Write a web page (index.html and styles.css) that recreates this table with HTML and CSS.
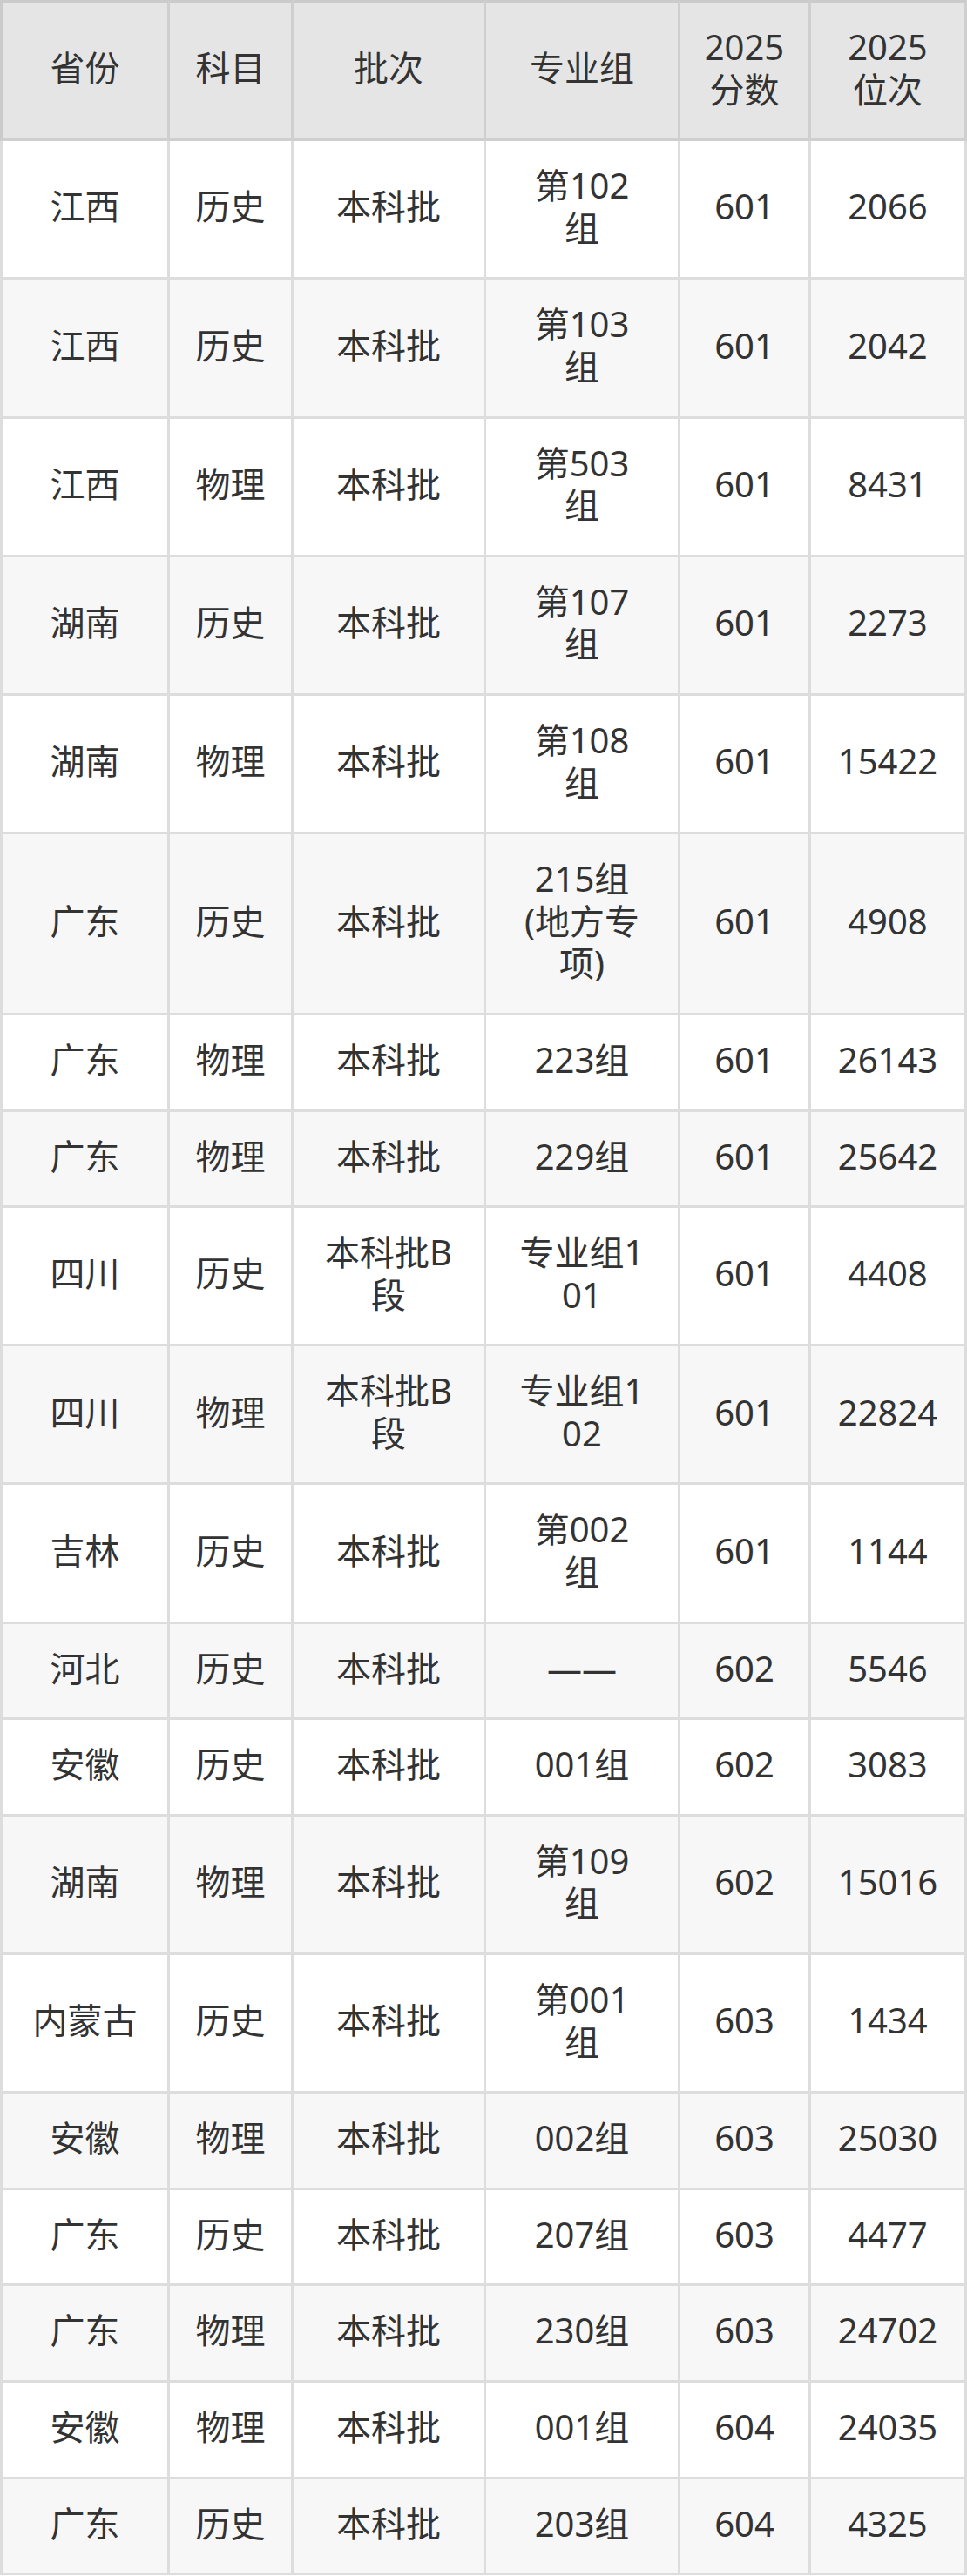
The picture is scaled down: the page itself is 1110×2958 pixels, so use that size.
FILE: index.html
```html
<!DOCTYPE html>
<html lang="zh-CN">
<head>
<meta charset="utf-8">
<title>2025 分数线</title>
<link rel="stylesheet" href="styles.css">
</head>
<body>
<table class="score-table">
  <colgroup>
    <col class="c-prov">
    <col class="c-subj">
    <col class="c-batch">
    <col class="c-group">
    <col class="c-score">
    <col class="c-rank">
  </colgroup>
  <thead>
    <tr>
      <th>省份</th>
      <th>科目</th>
      <th>批次</th>
      <th>专业组</th>
      <th>2025<br>分数</th>
      <th>2025<br>位次</th>
    </tr>
  </thead>
  <tbody>
    <tr><td>江西</td><td>历史</td><td>本科批</td><td>第102<br>组</td><td>601</td><td>2066</td></tr>
    <tr><td>江西</td><td>历史</td><td>本科批</td><td>第103<br>组</td><td>601</td><td>2042</td></tr>
    <tr><td>江西</td><td>物理</td><td>本科批</td><td>第503<br>组</td><td>601</td><td>8431</td></tr>
    <tr><td>湖南</td><td>历史</td><td>本科批</td><td>第107<br>组</td><td>601</td><td>2273</td></tr>
    <tr><td>湖南</td><td>物理</td><td>本科批</td><td>第108<br>组</td><td>601</td><td>15422</td></tr>
    <tr><td>广东</td><td>历史</td><td>本科批</td><td>215组<br>(地方专<br>项)</td><td>601</td><td>4908</td></tr>
    <tr><td>广东</td><td>物理</td><td>本科批</td><td>223组</td><td>601</td><td>26143</td></tr>
    <tr><td>广东</td><td>物理</td><td>本科批</td><td>229组</td><td>601</td><td>25642</td></tr>
    <tr><td>四川</td><td>历史</td><td>本科批B<br>段</td><td>专业组1<br>01</td><td>601</td><td>4408</td></tr>
    <tr><td>四川</td><td>物理</td><td>本科批B<br>段</td><td>专业组1<br>02</td><td>601</td><td>22824</td></tr>
    <tr><td>吉林</td><td>历史</td><td>本科批</td><td>第002<br>组</td><td>601</td><td>1144</td></tr>
    <tr><td>河北</td><td>历史</td><td>本科批</td><td>——</td><td>602</td><td>5546</td></tr>
    <tr><td>安徽</td><td>历史</td><td>本科批</td><td>001组</td><td>602</td><td>3083</td></tr>
    <tr><td>湖南</td><td>物理</td><td>本科批</td><td>第109<br>组</td><td>602</td><td>15016</td></tr>
    <tr><td>内蒙古</td><td>历史</td><td>本科批</td><td>第001<br>组</td><td>603</td><td>1434</td></tr>
    <tr><td>安徽</td><td>物理</td><td>本科批</td><td>002组</td><td>603</td><td>25030</td></tr>
    <tr><td>广东</td><td>历史</td><td>本科批</td><td>207组</td><td>603</td><td>4477</td></tr>
    <tr><td>广东</td><td>物理</td><td>本科批</td><td>230组</td><td>603</td><td>24702</td></tr>
    <tr><td>安徽</td><td>物理</td><td>本科批</td><td>001组</td><td>604</td><td>24035</td></tr>
    <tr><td>广东</td><td>历史</td><td>本科批</td><td>203组</td><td>604</td><td>4325</td></tr>
  </tbody>
</table>
</body>
</html>
```
FILE: styles.css
```css
html, body {
  margin: 0;
  padding: 0;
  background: #ffffff;
}

.score-table {
  width: 1110px;
  table-layout: fixed;
  border-collapse: separate;
  border-spacing: 0;
  font-family: "Noto Sans", "Noto Sans CJK SC", sans-serif;
  font-size: 40px;
  line-height: 48.6px;
  color: #333333;
}

.c-prov { width: 195px; }
.c-subj { width: 142px; }
.c-batch { width: 221px; }
.c-group { width: 223px; }
.c-score { width: 150px; }
.c-rank { width: 179px; }

.score-table th,
.score-table td {
  padding: 27px 0 32px;
  text-align: center;
  vertical-align: middle;
  white-space: nowrap;
  font-weight: 400;
  border-right: 3px solid #dddddd;
  border-bottom: 3px solid #dddddd;
}

.score-table th:first-child,
.score-table td:first-child {
  border-left: 3px solid #dddddd;
}

.score-table th {
  background: #e5e5e5;
  border-color: #cfcfcf;
  border-top: 3px solid #cbcbcb;
}

.score-table th:first-child {
  border-left-color: #cbcbcb;
}

.score-table tbody tr:nth-child(odd) td {
  background: #ffffff;
}

.score-table tbody tr:nth-child(even) td {
  background: #f7f7f7;
}
```
